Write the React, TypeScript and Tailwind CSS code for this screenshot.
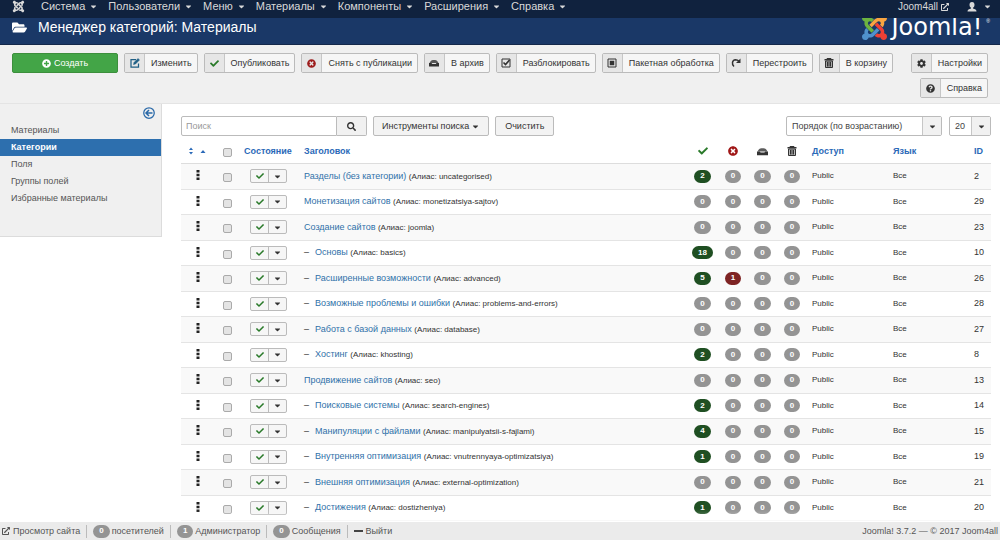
import type { ReactNode } from "react";
import {
  FaCaretDown,
  FaCheck,
  FaCog,
  FaExternalLinkAlt,
  FaFolderOpen,
  FaJoomla,
  FaPlusCircle,
  FaQuestionCircle,
  FaSearch,
  FaTimesCircle,
  FaUser,
} from "react-icons/fa";

const menu = ["Система", "Пользователи", "Меню", "Материалы", "Компоненты", "Расширения", "Справка"];

function ArchiveIcon({ className = "size-[10px]" }: { className?: string }) {
  return (
    <svg viewBox="0 0 20 18" className={className} fill="currentColor" aria-hidden="true">
      <path d="M1 9C3 5 5 3 8 3h4c3 0 5 2 7 6z" opacity=".8" />
      <path d="M0 9h5l1.500 2h7L15 9h5v7H0z" />
    </svg>
  );
}

function TrashIcon({ className = "size-[10px]" }: { className?: string }) {
  return (
    <svg viewBox="0 0 20 20" className={className} fill="none" stroke="currentColor" strokeWidth="2" aria-hidden="true">
      <path d="M1 3.500h18M7 3V1h6v2" strokeWidth="3" />
      <path d="M3 6h14v13H3z" fill="currentColor" fillOpacity=".35" />
      <path d="M7 8v9M10 8v9M13 8v9" />
    </svg>
  );
}

function EditIcon() {
  return (
    <svg viewBox="0 0 20 20" className="size-[10px] text-[#1f5f85]" fill="none" stroke="currentColor" strokeWidth="2.500" aria-hidden="true">
      <path d="M12 3H2v15h15v-7" />
      <path d="M7 13l1-4 8-8 3 3-8 8z" fill="currentColor" strokeWidth="1" />
    </svg>
  );
}

function CheckboxIcon() {
  return (
    <svg viewBox="0 0 20 20" className="size-[10px]" fill="none" stroke="currentColor" aria-hidden="true">
      <path d="M2 2h16v16H2z" strokeWidth="2" />
      <path d="M5 9l4 4 8-9" strokeWidth="3.200" />
    </svg>
  );
}

function BatchIcon() {
  return (
    <svg viewBox="0 0 20 20" className="size-[10px]" aria-hidden="true">
      <path d="M2 2h16v16H2z" fill="none" stroke="currentColor" strokeWidth="2" />
      <path d="M5.500 5.500h9v9h-9z" fill="currentColor" />
    </svg>
  );
}

function RebuildIcon() {
  return (
    <svg viewBox="0 0 20 20" className="size-[10px]" aria-hidden="true">
      <path d="M6 17C1 13 2 4 9 3.500c3 0 5 1 7 3" fill="none" stroke="currentColor" strokeWidth="3" />
      <path d="M19 1v9h-9z" fill="currentColor" />
    </svg>
  );
}

function PersonIcon() {
  return (
    <svg viewBox="0 0 20 20" className="size-[10px]" fill="currentColor" aria-hidden="true">
      <path d="M10 0c3.500 0 5 2.500 5 5.500 0 3-1.300 5-3 6.200V13c4 .8 7 2.500 7 6H1c0-3.500 3-5.200 7-6v-1.300C6.300 10.500 5 8.500 5 5.500 5 2.500 6.500 0 10 0z" />
    </svg>
  );
}

function JoomlaMark() {
  return (
    <svg viewBox="0 32 448 448" className="-mt-[3px] size-[25px] shrink-0" aria-hidden="true">
      <path fill="#6cb33f" d="M.6 92.1C.6 58.8 27.4 32 60.4 32c30 0 54.5 21.9 59.2 50.2 32.6-7.6 67.1.6 96.5 30l-44.3 44.3c-20.5-20.5-42.6-16.3-55.4-3.5-14.3 14.3-14.3 37.9 0 52.2l99.5 99.5-44 44.3c-87.7-87.2-49.7-49.7-99.8-99.7-26.8-26.5-35-64.8-24.8-98.9C20.4 144.6.6 120.7.6 92.1z" />
      <path fill="#f9a541" d="M130.1 208.500l44.3 44.3c10-10 89.7-89.7 99.7-99.8 14.3-14.3 37.6-14.3 51.9 0 12.8 12.8 17 35-3.5 55.4l44 44.3c31.2-31.2 38.5-67.6 28.9-101.2 29.2-4.1 51.9-29.2 51.9-59.5 0-33.2-26.8-60.1-59.8-60.1-30.3 0-55.4 22.5-59.5 51.6-33.8-9.9-71.7-1.5-98.3 25.1-18.3 19.1-71.1 71.5-99.6 99.9z" />
      <path fill="#ee4035" d="M396.4 360.700c8.2-32.7-.9-68.5-26.3-93.9-11.8-12.2 5 4.7-99.5-99.7l-44.3 44.3 99.7 99.7c14.3 14.3 14.3 37.6 0 51.9-12.8 12.8-35 17-55.4-3.5l-44 44.3c27.6 30.2 68 38.8 102.7 28 5.5 27.4 29.7 48.1 58.9 48.1 33 0 59.8-26.8 59.8-60.1 0-30.2-22.5-55-51.6-59.1z" />
      <path fill="#4f91cd" d="M312.100 307.600l-44-44.3c-87 86.4-50.4 50.4-99.7 99.8-14.3 14.3-37.6 14.3-51.9 0-13.1-13.4-16.9-35.3 3.2-55.4l-44-44.3c-30.2 30.2-38 65.2-29.5 98.3-26.7 6-46.2 29.9-46.2 58.2C0 453.2 26.8 480 59.8 480c28.6 0 52.5-19.8 58.6-46.7 32.7 8.2 68.5-.6 94.2-26 32.1-32 12.2-12.4 99.5-99.7z" />
    </svg>
  );
}

function ToolButton({ icon, children }: { icon: ReactNode; children: ReactNode }) {
  return (
    <button type="button" className="flex h-5 items-stretch overflow-hidden rounded-[2px] border border-[#bbb] bg-[#f6f6f6] text-[9px] whitespace-nowrap text-[#333]">
      <span className="flex w-5 items-center justify-center border-r border-[#c6c6c6] bg-[#e6e6e6]">{icon}</span>
      <span className="flex items-center pr-[5px] pl-[6px]">{children}</span>
    </button>
  );
}

const tools: [string, ReactNode][] = [
  ["Изменить", <EditIcon />],
  ["Опубликовать", <FaCheck className="size-[9px] text-[#2a7a2a]" />],
  ["Снять с публикации", <FaTimesCircle className="size-[9px] text-[#9d1c1c]" />],
  ["В архив", <ArchiveIcon />],
  ["Разблокировать", <CheckboxIcon />],
  ["Пакетная обработка", <BatchIcon />],
  ["Перестроить", <RebuildIcon />],
  ["В корзину", <TrashIcon />],
];

const sections = ["Материалы", "Категории", "Поля", "Группы полей", "Избранные материалы"];

type Row = { title: string; alias: string; nested?: boolean; published: number; unpublished?: number; id: number };

const rows: Row[] = [
  { title: "Разделы (без категории)", alias: "uncategorised", published: 2, id: 2 },
  { title: "Монетизация сайтов", alias: "monetizatsiya-sajtov", published: 0, id: 29 },
  { title: "Создание сайтов", alias: "joomla", published: 0, id: 23 },
  { title: "Основы", alias: "basics", nested: true, published: 18, id: 10 },
  { title: "Расширенные возможности", alias: "advanced", nested: true, published: 5, unpublished: 1, id: 26 },
  { title: "Возможные проблемы и ошибки", alias: "problems-and-errors", nested: true, published: 0, id: 28 },
  { title: "Работа с базой данных", alias: "database", nested: true, published: 0, id: 27 },
  { title: "Хостинг", alias: "khosting", nested: true, published: 2, id: 8 },
  { title: "Продвижение сайтов", alias: "seo", published: 0, id: 13 },
  { title: "Поисковые системы", alias: "search-engines", nested: true, published: 2, id: 14 },
  { title: "Манипуляции с файлами", alias: "manipulyatsii-s-fajlami", nested: true, published: 4, id: 15 },
  { title: "Внутренняя оптимизация", alias: "vnutrennyaya-optimizatsiya", nested: true, published: 1, id: 19 },
  { title: "Внешняя оптимизация", alias: "external-optimization", nested: true, published: 0, id: 21 },
  { title: "Достижения", alias: "dostizheniya", nested: true, published: 1, id: 20 },
];

function Badge({ value, tone = "bg-[#1f4f22]" }: { value: number; tone?: string }) {
  return (
    <span
      className={`inline-flex h-[13px] items-center justify-center rounded-full px-[6px] text-[8px] font-bold text-white ${value ? tone : "bg-[#949494]"}`}
    >
      {value}
    </span>
  );
}

function Tick({ label }: { label: string }) {
  return (
    <input
      type="checkbox"
      aria-label={label}
      className="mt-[3px] block size-[9px] appearance-none rounded-[2px] border border-[#aaa] bg-[#e4e4e4] checked:bg-[#2d6ca2]"
    />
  );
}

function Picker({ label, value, options, className }: { label: string; value: string; options: string[]; className: string }) {
  return (
    <div className={`relative ${className}`}>
      <select
        aria-label={label}
        defaultValue={value}
        className="h-5 w-full appearance-none rounded-[2px] border border-[#bbb] bg-white px-[5px] text-[9px] text-[#444]"
      >
        {options.map((option) => (
          <option key={option}>{option}</option>
        ))}
      </select>
      <span className="pointer-events-none absolute inset-y-px right-px flex w-[19px] items-center justify-center border-l border-[#c6c6c6] bg-[#f1f1f1] text-[#333]">
        <FaCaretDown className="size-[9px]" />
      </span>
    </div>
  );
}

function StatusItem({ count, label }: { count: number; label: string }) {
  return (
    <a href="#" className="flex items-center gap-[2px] border-l border-[#bbb] pl-[6px]">
      <span className="flex h-[13px] items-center rounded-full bg-[#949494] px-[6px] text-[8px] font-bold text-white">{count}</span>
      {label}
    </a>
  );
}

const heading = "text-left text-[9px] font-bold text-[#2a69b8]";

export default function App() {
  return (
    <div className="flex min-h-screen flex-col bg-white font-['Liberation_Sans',Arial,sans-serif] text-[9px] leading-none text-[#333]">
      <nav className="relative z-10 flex h-[18px] items-start bg-[#10223e] pr-2 pl-[12px] text-[11px] text-[#d9d9d9]">
        <a href="#" aria-label="Панель управления" className="mr-4">
          <FaJoomla className="size-[13px]" />
        </a>
        <ul className="flex gap-[10px]">
          {menu.map((item) => (
            <li key={item}>
              <a href="#" className="flex h-[13px] items-center gap-[4px]">
                {item}
                <FaCaretDown className="size-[9px]" />
              </a>
            </li>
          ))}
        </ul>
        <div className="ml-auto flex h-[13px] items-center">
          <a href="#" className="flex items-center gap-[3px] text-[10px]">
            Joom4all
            <FaExternalLinkAlt className="size-2" />
          </a>
          <button type="button" aria-label="Профиль" className="ml-[18px] flex items-center gap-[6px]">
            <PersonIcon />
            <FaCaretDown className="size-[9px]" />
          </button>
        </div>
      </nav>

      <header className="flex h-[27px] items-start border-b border-[#14284a] bg-[#1a3867] pr-[10px] pl-[12px] text-white">
        <h1 className="flex h-[18px] items-center gap-[11px] text-[14px]">
          <FaFolderOpen className="size-[15px]" />
          Менеджер категорий: Материалы
        </h1>
        <div className="ml-auto flex items-start gap-[4px]">
          <JoomlaMark />
          <span className="font-['DejaVu_Sans',sans-serif] text-[24px] leading-[18px]">Joomla!</span>
          <span className="text-[5px] leading-[6px]">®</span>
        </div>
      </header>

      <div className="flex items-start border-b border-[#e4e4e4] bg-[#f0f0f0] px-[12px] pt-2 pb-[5px]">
        <div role="toolbar" aria-label="Действия" className="flex gap-[6px]">
          <button type="button" className="flex h-5 w-[106px] items-center justify-center gap-[3px] rounded-[2px] border border-[#3c8f3c] bg-[#43a547] text-[9px] text-white">
            <FaPlusCircle className="size-[9px]" />
            Создать
          </button>
          {tools.map(([label, icon]) => (
            <ToolButton key={label} icon={icon}>
              {label}
            </ToolButton>
          ))}
        </div>
        <div className="ml-auto flex flex-col items-end gap-[5px]">
          <ToolButton icon={<FaCog className="size-[9px]" />}>Настройки</ToolButton>
          <ToolButton icon={<FaQuestionCircle className="size-[9px]" />}>Справка</ToolButton>
        </div>
      </div>

      <div className="flex items-start">
        <aside className="w-[162px] shrink-0 border-r border-b border-[#dcdcdc] bg-[#f0f0f0] pt-[3px] pb-[29px]">
          <div className="flex justify-end pr-[6px] pb-[3px]">
            <button type="button" aria-label="Скрыть боковую панель" className="text-[#2a69a8]">
              <svg viewBox="0 0 24 24" className="size-[12px]" fill="none" stroke="currentColor" strokeWidth="2.500" aria-hidden="true">
                <circle cx="12" cy="12" r="10.500" />
                <path d="M19 12H6M12 6l-6 6 6 6" strokeWidth="3" />
              </svg>
            </button>
          </div>
          <ul>
            {sections.map((section) => (
              <li key={section}>
                <a
                  href="#"
                  className={`flex h-[17px] items-center pl-[11px] ${section === "Категории" ? "bg-[#2d6fae] font-bold text-white" : "text-[#555]"}`}
                >
                  {section}
                </a>
              </li>
            ))}
          </ul>
        </aside>

        <main className="min-w-0 flex-1 pt-3 pr-[9px] pl-[19px]">
          <div className="flex">
            <input
              type="text"
              aria-label="Поиск"
              placeholder="Поиск"
              className="h-5 w-[156px] rounded-l-[2px] border border-[#bbb] px-[4px] text-[9px] placeholder:text-[#999]"
            />
            <button type="button" aria-label="Найти" className="flex h-5 w-[30px] items-center justify-center rounded-r-[2px] border border-l-0 border-[#bbb] bg-[#f1f1f1]">
              <FaSearch className="size-[9px]" />
            </button>
            <button type="button" className="ml-[6px] flex h-5 items-center gap-[2px] rounded-[2px] border border-[#bbb] bg-[#f3f3f3] px-2">
              Инструменты поиска
              <FaCaretDown className="size-[9px]" />
            </button>
            <button type="button" className="ml-[6px] h-5 rounded-[2px] border border-[#bbb] bg-[#f3f3f3] px-[9px]">
              Очистить
            </button>
            <div className="ml-auto flex gap-[7px]">
              <Picker label="Сортировка" value="Порядок (по возрастанию)" options={["Порядок (по возрастанию)", "Порядок (по убыванию)"]} className="w-[156px]" />
              <Picker label="Количество строк" value="20" options={["10", "20", "50", "100"]} className="w-[42px]" />
            </div>
          </div>

          <table className="mt-1 w-full table-fixed">
            <colgroup>
              <col className="w-[34px]" />
              <col className="w-[24px]" />
              <col className="w-[60px]" />
              <col />
              <col className="w-[31px]" />
              <col className="w-[30px]" />
              <col className="w-[29px]" />
              <col className="w-[30px]" />
              <col className="w-[81px]" />
              <col className="w-[81px]" />
              <col className="w-[22px]" />
            </colgroup>
            <thead>
              <tr className="h-[23px] border-b border-[#ddd]">
                <th className={heading}>
                  <button type="button" aria-label="Порядок" className="flex items-center gap-[6px] pl-[7px]">
                    <svg viewBox="0 0 10 16" className="h-2 w-[6px]" fill="currentColor" aria-hidden="true">
                      <path d="M5 1l4 5H1zM5 15l4-5H1z" />
                    </svg>
                    <svg viewBox="0 0 10 6" className="h-[3px] w-[6px]" fill="currentColor" aria-hidden="true">
                      <path d="M5 0l5 6H0z" />
                    </svg>
                  </button>
                </th>
                <th className="pl-[8px]">
                  <Tick label="Выбрать все" />
                </th>
                <th className={`${heading} pl-[5px]`}>Состояние</th>
                <th className={`${heading} pl-[5px]`}>Заголовок</th>
                <th aria-label="Опубликовано">
                  <FaCheck className="mx-auto size-[10px] text-[#2a7a2a]" />
                </th>
                <th aria-label="Не опубликовано">
                  <FaTimesCircle className="mx-auto size-[10px] text-[#a01717]" />
                </th>
                <th aria-label="В архиве">
                  <ArchiveIcon className="mx-auto size-[11px]" />
                </th>
                <th aria-label="В корзине">
                  <TrashIcon className="mx-auto size-[10px]" />
                </th>
                <th className={`${heading} pl-[5px]`}>Доступ</th>
                <th className={`${heading} pl-[5px]`}>Язык</th>
                <th className={`${heading} pl-[5px]`}>ID</th>
              </tr>
            </thead>
            <tbody>
              {rows.map((row) => (
                <tr key={row.id} className="border-b border-[#e4e4e4] odd:h-[26px] odd:bg-[#f9f9f9] even:h-[25px]">
                  <td>
                    <svg viewBox="0 0 4 10" className="mx-auto mb-[2px] h-[10px] w-1" fill="#222" aria-hidden="true">
                      <path d="M.5 0h3v2.500h-3zM.5 3.700h3v2.500h-3zM.5 7.400h3v2.500h-3z" />
                    </svg>
                  </td>
                  <td className="pl-[8px]">
                    <Tick label={row.title} />
                  </td>
                  <td className="pl-[11px]">
                    <div className="flex h-[14px] w-[37px] rounded-[2px] border border-[#bbb] bg-[#f6f6f6]">
                      <button type="button" aria-label="Снять с публикации" className="flex flex-1 items-center justify-center border-r border-[#bbb]">
                        <FaCheck className="size-[8px] text-[#2a7a2a]" />
                      </button>
                      <button type="button" aria-label="Другие действия" className="flex flex-1 items-center justify-center">
                        <FaCaretDown className="size-[9px]" />
                      </button>
                    </div>
                  </td>
                  <td className="pl-[5px] whitespace-nowrap">
                    {row.nested && <span className="mr-[6px]">–</span>}
                    <a href="#" className="text-[#3071a9]">
                      {row.title}
                    </a>{" "}
                    <span className="text-[8px]">(Алиас: {row.alias})</span>
                  </td>
                  <td className="text-center">
                    <Badge value={row.published} />
                  </td>
                  <td className="text-center">
                    <Badge value={row.unpublished ?? 0} tone="bg-[#7d2323]" />
                  </td>
                  <td className="text-center">
                    <Badge value={0} />
                  </td>
                  <td className="text-center">
                    <Badge value={0} />
                  </td>
                  <td className="pl-[5px] text-[8px]">Public</td>
                  <td className="pl-[5px] text-[8px]">Все</td>
                  <td className="pl-[5px]">{row.id}</td>
                </tr>
              ))}
            </tbody>
          </table>
        </main>
      </div>

      <footer className="relative mt-auto flex h-[18px] items-center justify-between bg-[#ebebeb] px-[2px] text-[9px] text-[#555] shadow-[0_-4px_8px_white]">
        <div className="flex gap-[6px]">
          <a href="#" className="flex items-center gap-[3px]">
            <FaExternalLinkAlt className="size-2" />
            Просмотр сайта
          </a>
          <StatusItem count={0} label="посетителей" />
          <StatusItem count={1} label="Администратор" />
          <StatusItem count={0} label="Сообщения" />
          <a href="#" className="flex items-center gap-[3px] border-l border-[#bbb] pl-[6px]">
            <span className="h-[2px] w-[9px] bg-[#444]" />
            Выйти
          </a>
        </div>
        <p>Joomla! 3.7.2 — © 2017 Joom4all</p>
      </footer>
    </div>
  );
}
